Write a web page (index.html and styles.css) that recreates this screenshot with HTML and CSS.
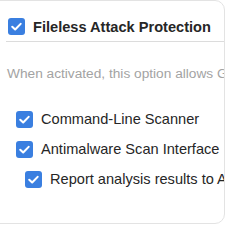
FILE: index.html
```html
<!DOCTYPE html>
<html>
<head>
<meta charset="utf-8">
<link rel="stylesheet" href="styles.css">
</head>
<body>
<div class="card">
  <div class="header">
    <span class="cb"><svg viewBox="0 0 18 18" width="17" height="17"><path d="M4.5 9.3 L7.6 12.2 L13.4 6.2" fill="none" stroke="#fff" stroke-width="2.2" stroke-linecap="round" stroke-linejoin="round"/></svg></span>
    <span class="title">Fileless Attack Protection</span>
  </div>
  <p class="desc">When activated, this option allows GravityZone to detect and block</p>
  <ul class="opts">
    <li class="opt"><span class="cb"><svg viewBox="0 0 18 18" width="17" height="17"><path d="M4.5 9.3 L7.6 12.2 L13.4 6.2" fill="none" stroke="#fff" stroke-width="2.2" stroke-linecap="round" stroke-linejoin="round"/></svg></span><span>Command-Line Scanner</span></li>
    <li class="opt"><span class="cb"><svg viewBox="0 0 18 18" width="17" height="17"><path d="M4.5 9.3 L7.6 12.2 L13.4 6.2" fill="none" stroke="#fff" stroke-width="2.2" stroke-linecap="round" stroke-linejoin="round"/></svg></span><span>Antimalware Scan Interface</span></li>
    <li class="opt sub"><span class="cb"><svg viewBox="0 0 18 18" width="17" height="17"><path d="M4.5 9.3 L7.6 12.2 L13.4 6.2" fill="none" stroke="#fff" stroke-width="2.2" stroke-linecap="round" stroke-linejoin="round"/></svg></span><span>Report analysis results to Antimalware Scan Interface</span></li>
  </ul>
</div>
</body>
</html>
```
FILE: styles.css
```css
html, body {
  margin: 0;
  padding: 0;
  background: #fff;
  overflow: hidden;
  width: 226px;
  height: 226px;
}
body {
  font-family: "Liberation Sans", Arial, sans-serif;
}
.card {
  margin-left: -10px;
  width: 233px;
  height: 222px;
  border: 1px solid #e3e3e3;
  border-radius: 10px;
  background: #fff;
  overflow: hidden;
}
.header {
  display: flex;
  align-items: center;
  gap: 8px;
  margin-left: 15px;
  padding: 17px 0 6px 2px;
  border-bottom: 1px solid #dcdcdc;
  white-space: nowrap;
}
.cb {
  flex: none;
  width: 17px;
  height: 17px;
  border-radius: 3px;
  background: #3a7fe0;
  display: flex;
}
.title {
  font-weight: bold;
  font-size: 14.6px;
  color: #262626;
}
.desc {
  margin: 24px 0 0 16px;
  font-size: 13.7px;
  color: #a3a3a3;
  white-space: nowrap;
}
.opts {
  list-style: none;
  margin: 29px 0 0 25px;
  padding: 0;
}
.opt {
  display: flex;
  align-items: center;
  gap: 8px;
  font-size: 14.6px;
  color: #262626;
  white-space: nowrap;
  height: 18px;
  margin-bottom: 12px;
}
.opt.sub {
  margin-left: 9px;
}
```
